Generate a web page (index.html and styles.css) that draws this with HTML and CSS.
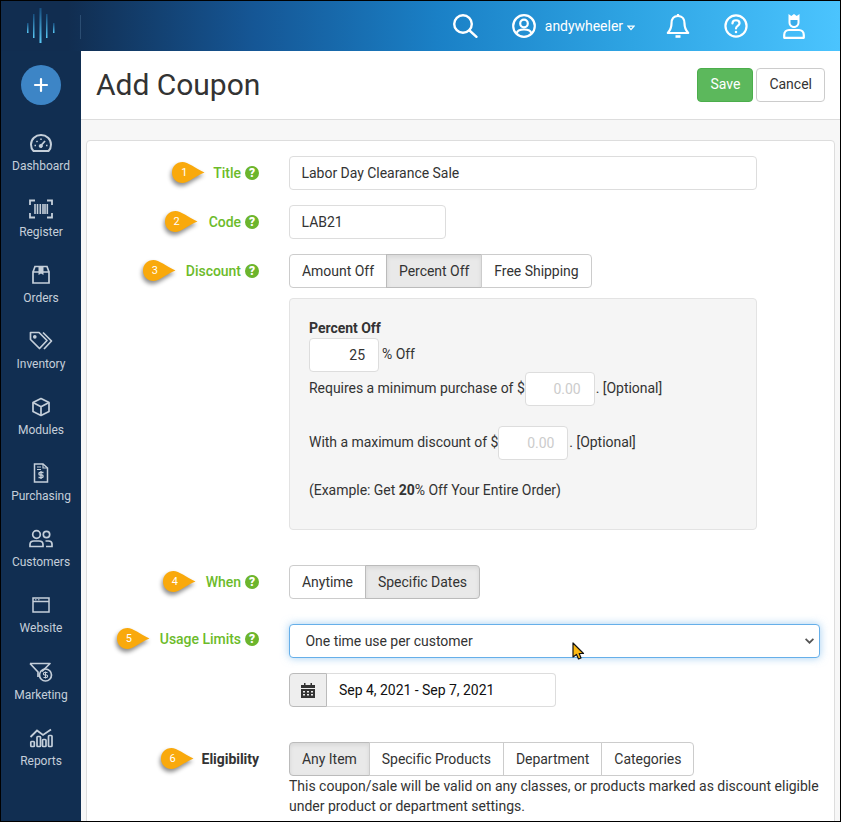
FILE: index.html
```html
<!DOCTYPE html>
<html lang="en">
<head>
<meta charset="utf-8">
<title>Add Coupon</title>
<link rel="stylesheet" href="styles.css">
</head>
<body>
<svg class="defs" width="0" height="0" aria-hidden="true">
  <defs>
    <symbol id="tag" viewBox="0 0 34 24">
      <path d="M11.5 1C17 1 24 7 33.5 11.5C24 15.500 17 22 11.5 22C5.500 22 1 17.500 1 11.500C1 5.500 5.500 1 11.500 1Z"/>
    </symbol>
  </defs>
</svg>
<div class="app">
  <header class="topbar">
    <div class="brand">
      <svg class="logo" width="30" height="36" viewBox="0 0 30 36">
        <defs>
          <linearGradient id="lg" x1="0" y1="0" x2="0" y2="1">
            <stop offset="0" stop-color="#174f80"/>
            <stop offset="1" stop-color="#59c8f5"/>
          </linearGradient>
        </defs>
        <rect x="1" y="16" width="1.500" height="10" fill="url(#lg)"/>
        <rect x="7" y="7" width="1.500" height="24" fill="url(#lg)"/>
        <rect x="13.500" y="1" width="2" height="35" fill="url(#lg)"/>
        <rect x="20" y="7" width="1.500" height="24" fill="url(#lg)"/>
        <rect x="27" y="16" width="1.500" height="10" fill="url(#lg)"/>
      </svg>
      <span class="brand-divider"></span>
    </div>
    <nav class="top-actions">
      <svg class="top-search" width="25" height="24" viewBox="0 0 25 24" fill="none" stroke="#fff" stroke-width="2.400" stroke-linecap="round"><circle cx="10" cy="10" r="8.800"/><path d="M16.500 16.500L23.500 22.800"/></svg>
      <svg class="top-user" width="24" height="24" viewBox="0 0 24 24" fill="none" stroke="#fff" stroke-width="2.200"><circle cx="12" cy="12" r="10.800"/><circle cx="12" cy="9.500" r="3.800"/><path d="M4.800 19C5.300 16.500 7.800 15.500 12 15.500S18.700 16.500 19.200 19"/></svg>
      <span class="top-name">andywheeler</span>
      <svg class="top-caret" width="8" height="6" viewBox="0 0 8 6" fill="none" stroke="#fff" stroke-width="1.200"><path d="M1 1.200H7L4 4.600Z"/></svg>
      <svg class="top-bell" width="24" height="26" viewBox="0 0 24 26" fill="none" stroke="#fff" stroke-width="2.200" stroke-linejoin="round"><path d="M12 3C7 3 5.500 7 5.500 10.500C5.500 15 4 17.500 1.800 20H22.200C20 17.500 18.500 15 18.500 10.500C18.500 7 17 3 12 3Z"/><path d="M12 1V3"/><path d="M9.500 23.500H14.500" stroke-width="2.600"/></svg>
      <svg class="top-help" width="24" height="24" viewBox="0 0 25 25" fill="none" stroke="#fff" stroke-width="2.300"><circle cx="12.500" cy="12.500" r="11"/><path d="M8.800 9.800C8.800 7.600 10.500 6.500 12.500 6.500C14.700 6.500 16.200 7.800 16.200 9.600C16.200 12.400 12.500 12.300 12.500 15" stroke-linecap="round"/><circle cx="12.500" cy="18.800" r="1.300" fill="#fff" stroke="none"/></svg>
      <svg class="top-admin" width="22" height="26" viewBox="0 0 22 26" fill="none" stroke="#fff" stroke-width="2.200"><path d="M5.500 1L8.300 3L11 1L13.700 3L16.500 1V9.500C16.500 12.500 14 15 11 15S5.500 12.500 5.500 9.500Z" fill="#fff" stroke="none"/><path d="M7.500 7H14.500V9.500C14.500 11.500 13 13 11 13S7.500 11.500 7.500 9.500Z" fill="#38ace9" stroke="none"/><path d="M1.200 24.800V22C1.200 19 3.500 17 6 17H16C18.500 17 20.800 19 20.800 22V24.800Z" stroke-linejoin="round"/></svg>
    </nav>
  </header>
  <div class="body">
    <aside class="sidebar">
      <div class="add-btn"><svg width="16" height="16" viewBox="0 0 16 16" stroke="#fff" stroke-width="2.200" stroke-linecap="round"><path d="M8 2V14M2 8H14"/></svg></div>
      <a class="nav-item">
        <svg width="22" height="20" viewBox="0 0 22 20" fill="none" stroke="#c5cfda" stroke-width="2"><path d="M3.500 18C2 16.500 1 14 1 11.500C1 6 5.500 2 11 2S21 6 21 11.500C21 14 20 16.500 18.500 18Z"/><path d="M11 12.500L15 8" stroke-width="1.800"/><circle cx="10.800" cy="13" r="1.600" fill="#c5cfda" stroke-width="1"/><path d="M4.500 12.500H6M6.500 8L7.500 9M11 5.500V7M17.500 12.500H16" stroke-width="1.500"/></svg>
        <span>Dashboard</span>
      </a>
      <a class="nav-item">
        <svg width="24" height="20" viewBox="0 0 24 20" fill="none" stroke="#c5cfda" stroke-width="1.800"><path d="M1 6V1.500H6M18 1.500H23V6M23 14V18.500H18M6 18.500H1V14"/><path d="M6 5V15M8.500 5V15M11.300 5V15M14 5V15M16 5V15M18.300 5V15" stroke-width="1.600"/></svg>
        <span>Register</span>
      </a>
      <a class="nav-item">
        <svg width="18" height="20" viewBox="0 0 18 20" fill="none" stroke="#c5cfda" stroke-width="1.700"><path d="M1 7H17V18H1ZM1 7L3 1.500H15L17 7"/><path d="M6.500 1.500H11.500V10L9 8.500L6.500 10Z" fill="#c5cfda" stroke="none"/></svg>
        <span>Orders</span>
      </a>
      <a class="nav-item">
        <svg width="24" height="20" viewBox="0 0 24 20" fill="none" stroke="#c5cfda" stroke-width="1.700" stroke-linejoin="round"><path d="M1.500 1.500H10L18 9.500L10.500 17.500L1.500 8.500Z"/><path d="M14 1.500L22.500 10L15 18"/><circle cx="5.800" cy="5.800" r="1" fill="#c5cfda"/></svg>
        <span>Inventory</span>
      </a>
      <a class="nav-item">
        <svg width="20" height="20" viewBox="0 0 20 20" fill="none" stroke="#c5cfda" stroke-width="1.700" stroke-linejoin="round"><path d="M10 1.500L18 5.500V14.500L10 18.500L2 14.500V5.500Z"/><path d="M2 5.500L10 9.700L18 5.500M10 9.700V18.500"/></svg>
        <span>Modules</span>
      </a>
      <a class="nav-item">
        <svg width="16" height="20" viewBox="0 0 16 20" fill="none" stroke="#c5cfda" stroke-width="1.500"><path d="M1.500 1H10L14.500 5V19H1.500Z"/><path d="M10 1V5H14.500M4 4H8M4 6.500H8" stroke-width="1.200"/><path d="M10.500 9.500H7C5.500 9.500 5.500 12 7 12H9C10.500 12 10.500 14.500 9 14.500H5.500M8 8V16" stroke-width="1.300"/></svg>
        <span>Purchasing</span>
      </a>
      <a class="nav-item">
        <svg width="24" height="20" viewBox="0 0 24 20" fill="none" stroke="#c5cfda" stroke-width="1.700"><circle cx="7.500" cy="5.500" r="3.800"/><circle cx="17.500" cy="5.500" r="3.200"/><path d="M1 17.500V15.500C1 13 3 12 5 12H10C12 12 14 13 14 15.500V17.500Z"/><path d="M16.500 12H19.500C21.500 12 23 13 23 15V17.500H17"/></svg>
        <span>Customers</span>
      </a>
      <a class="nav-item">
        <svg width="18" height="16" viewBox="0 0 18 16" fill="none" stroke="#c5cfda" stroke-width="1.500"><path d="M1 1H17V15H1ZM1 4.500H17"/><path d="M3 2.800H4.500M6 2.800H7.500" stroke-width="1"/></svg>
        <span>Website</span>
      </a>
      <a class="nav-item">
        <svg width="24" height="20" viewBox="0 0 24 20" fill="none" stroke="#c5cfda" stroke-width="1.700" stroke-linejoin="round"><path d="M1 1.500H21L13 9.500M1 1.500L9 10V15"/><circle cx="16.500" cy="13" r="6"/><path d="M18.500 10.500H15.500C14 10.500 14 13 15.500 13H17.500C19 13 19 15.500 17.500 15.500H14.500M16.500 9.500V16.500" stroke-width="1.100"/></svg>
        <span>Marketing</span>
      </a>
      <a class="nav-item">
        <svg width="24" height="20" viewBox="0 0 24 20" fill="none" stroke="#c5cfda" stroke-width="1.700"><path d="M1.500 9L8 2.500L14 7L22 1.500" stroke-width="1.800"/><rect x="1.800" y="13.500" width="3.500" height="5" rx=".8"/><rect x="8" y="8.500" width="3.500" height="10" rx=".8"/><rect x="13.500" y="11.500" width="3.500" height="7" rx=".8"/><rect x="19.500" y="7.500" width="3.500" height="11" rx=".8"/></svg>
        <span>Reports</span>
      </a>
    </aside>
    <main class="main">
      <div class="title-bar">
        <h1>Add Coupon</h1>
        <div class="title-actions">
          <button class="btn btn-save">Save</button>
          <button class="btn">Cancel</button>
        </div>
      </div>
      <div class="content">
        <form class="card">
          <div class="row">
            <div class="label-col"><span class="tag"><svg width="34" height="24"><use href="#tag"/></svg><b>1</b></span><span class="label">Title</span><span class="help">?</span></div>
            <div class="field field-title">Labor Day Clearance Sale</div>
          </div>
          <div class="row">
            <div class="label-col"><span class="tag tag-2"><svg width="34" height="24"><use href="#tag"/></svg><b>2</b></span><span class="label">Code</span><span class="help">?</span></div>
            <div class="field field-code">LAB21</div>
          </div>
          <div class="row row-discount">
            <div class="label-col"><span class="tag tag-3"><svg width="34" height="24"><use href="#tag"/></svg><b>3</b></span><span class="label">Discount</span><span class="help">?</span></div>
            <div class="stack">
              <div class="btn-group">
                <span class="seg">Amount Off</span><span class="seg active">Percent Off</span><span class="seg">Free Shipping</span>
              </div>
              <div class="panel">
                <strong class="panel-title">Percent Off</strong>
                <div class="panel-line"><span class="num">25</span><span class="after">% Off</span></div>
                <div class="panel-line">Requires a minimum purchase of $<span class="num placeholder">0.00</span><span class="after-tight">. [Optional]</span></div>
                <div class="panel-line panel-gap">With a maximum discount of $<span class="num placeholder">0.00</span><span class="after-tight">. [Optional]</span></div>
                <p class="panel-note">(Example: Get <b>20</b>% Off Your Entire Order)</p>
              </div>
            </div>
          </div>
          <div class="row row-when">
            <div class="label-col"><span class="tag tag-4"><svg width="34" height="24"><use href="#tag"/></svg><b>4</b></span><span class="label">When</span><span class="help">?</span></div>
            <div class="btn-group">
              <span class="seg">Anytime</span><span class="seg active">Specific Dates</span>
            </div>
          </div>
          <div class="row row-usage">
            <div class="label-col label-col-up"><span class="tag tag-5"><svg width="34" height="24"><use href="#tag"/></svg><b>5</b></span><span class="label">Usage Limits</span><span class="help">?</span></div>
            <div class="stack">
              <div class="select">
                <span>One time use per customer</span>
                <svg width="9" height="6" viewBox="0 0 9 6" fill="none" stroke="#555" stroke-width="1.700"><path d="M.6 .8L4.500 4.700L8.400 .8"/></svg>
              </div>
              <div class="date-group">
                <span class="addon"><svg width="14" height="15" viewBox="0 0 14 15"><path fill="#333" d="M3 0H4.500V2H9.500V0H11V2H14V5H0V2H3ZM0 6H14V15H0ZM2 8V9.500H4V8ZM6 8V9.500H8V8ZM10 8V9.500H12V8ZM2 11V12.500H4V11ZM6 11V12.500H8V11ZM10 11V12.500H12V11Z" fill-rule="evenodd"/></svg></span>
                <span class="date-value">Sep 4, 2021 - Sep 7, 2021</span>
              </div>
            </div>
          </div>
          <div class="row row-elig">
            <div class="label-col"><span class="tag tag-6"><svg width="34" height="24"><use href="#tag"/></svg><b>6</b></span><span class="label label-dark">Eligibility</span></div>
            <div class="stack stack-tight">
              <div class="btn-group">
                <span class="seg active">Any Item</span><span class="seg">Specific Products</span><span class="seg">Department</span><span class="seg">Categories</span>
              </div>
              <p class="elig-note">This coupon/sale will be valid on any classes, or products marked as discount eligible under product or department settings.</p>
            </div>
          </div>
        </form>
      </div>
    </main>
  </div>
  <svg class="cursor" width="14" height="20" viewBox="0 0 14 20"><path d="M1 1V15L4.500 12.500L6.500 17L9 16L7.200 11.500H11.500Z" fill="#fdb913" stroke="#111" stroke-width="1.200" stroke-linejoin="round"/></svg>
</div>
</body>
</html>
```
FILE: styles.css
```css
* { box-sizing: border-box; }
html, body { margin: 0; padding: 0; }
body { font-family: Roboto, "Liberation Sans", sans-serif; font-size: 14px; line-height: 20px; letter-spacing: -0.03px; color: #333; background: #000; }
.defs { display: block; height: 0; }
.app { position: relative; width: 841px; height: 822px; border: 1px solid #000; overflow: hidden; background: #f7f7f7; display: flex; flex-direction: column; }

.topbar { height: 50px; flex: none; display: flex; justify-content: space-between; align-items: center; background: linear-gradient(90deg, #112d50 0, #112d50 8%, #155695 30%, #1a80c6 52%, #2ea4e3 75%, #4bc4fe 100%); }
.brand { width: 80px; height: 50px; display: flex; align-items: center; position: relative; }
.logo { margin: 0 0 0 25px; flex: none; position: relative; top: -1px; }
.brand-divider { position: absolute; left: 79px; top: 14px; width: 1px; height: 24px; background: #2b4d72; }
.top-actions { display: flex; align-items: center; height: 50px; padding-right: 35px; }
.top-search { margin-right: 34px; }
.top-user { margin-right: 9px; }
.top-name { color: #fff; font-size: 14px; }
.top-caret { margin: 3px 0 0 4px; }
.top-bell { margin-left: 31px; }
.top-help { margin-left: 34px; }
.top-admin { margin-left: 35px; }

.body { flex: 1; display: flex; min-height: 0; }
.sidebar { width: 80px; flex: none; background: #112e51; display: flex; flex-direction: column; align-items: center; padding-top: 14px; }
.add-btn { width: 40px; height: 40px; border-radius: 50%; background: #3d85c6; display: flex; align-items: center; justify-content: center; margin-bottom: 25.700px; }
.nav-item { height: 66.12px; flex: none; width: 100%; display: flex; flex-direction: column; align-items: center; color: #c5cfda; font-size: 12px; line-height: 16px; }
.nav-item svg { height: 22px; flex: none; margin-top: 1px; margin-bottom: 4px; }
.main { flex: 1; min-width: 0; display: flex; flex-direction: column; }
.title-bar { height: 69px; flex: none; background: #fff; border-bottom: 1px solid #ddd; display: flex; align-items: center; justify-content: space-between; padding: 0 15px; }
h1 { margin: 0; font-size: 30px; font-weight: 400; line-height: 36px; color: #333; }
.title-actions { display: flex; gap: 3px; }
.btn { height: 34px; padding: 0 12px 2px; border: 1px solid #ccc; border-radius: 4px; background: #fff; color: #333; font: 14px/20px Roboto, sans-serif; }
.btn-save { background: #5cb85c; border-color: #4cae4c; color: #fff; }

.content { flex: 1; padding: 20px 5px 0; min-height: 0; }
.card { background: #fff; border: 1px solid #ddd; border-radius: 4px; padding: 15px 15px 0; height: 700px; }
.row { display: flex; gap: 30px; margin-bottom: 15px; align-items: flex-start; }
.label-col { width: 157px; flex: none; height: 34px; display: flex; align-items: center; justify-content: flex-end; }
.label-col-up { margin-top: -2px; }
.label { font-weight: 500; color: #6cbb2a; }
.label-dark { color: #333; font-weight: 700; }
.help { width: 14px; height: 14px; border-radius: 50%; background: #6cb52d; color: #fff; font: 900 12px/14px Roboto, sans-serif; text-align: center; margin-left: 4px; }
.tag { position: relative; width: 34px; height: 24px; margin-right: 8px; flex: none; }
.tag svg { display: block; fill: #f9a90c; filter: drop-shadow(-1px 3px 2px rgba(0,0,0,.45)); overflow: visible; }
.tag b { position: absolute; left: 1px; top: 2px; width: 24px; text-align: center; color: #fff; font: 400 11px/20px Roboto, sans-serif; }
.tag-2 { margin-right: 11px; }
.tag-3 { margin-right: 10px; }
.tag-4 { margin-right: 10px; }
.tag-5 { margin-right: 10px; }

.field { height: 34px; border: 1px solid #ddd; border-radius: 4px; padding: 6px 12px 6px 11.500px; color: #333; background: #fff; }
.field-title { width: 468px; }
.field-code { width: 157px; }
.stack { display: flex; flex-direction: column; gap: 10px; align-items: flex-start; }
.stack-tight { gap: 0; }
.btn-group { display: inline-flex; height: 34px; }
.seg { height: 34px; padding: 6px 12px; border: 1px solid #ccc; margin-left: -1px; background: #fff; color: #333; white-space: nowrap; }
.seg:first-child { margin-left: 0; border-radius: 4px 0 0 4px; }
.seg:last-child { border-radius: 0 4px 4px 0; }
.seg.active { background: #e9e9e9; border-color: #bbb; box-shadow: inset 0 2px 4px rgba(0,0,0,.08); }

.panel { width: 468px; height: 232px; background: #f5f5f5; border: 1px solid #e3e3e3; border-radius: 4px; padding: 19px; }
.panel-title { display: block; font-weight: 700; height: 20px; }
.panel-line { height: 34px; padding-bottom: 2px; display: flex; align-items: center; }
.panel-gap { margin-top: 20px; }
.num { width: 70px; height: 34px; margin-bottom: -2px; flex: none; background: #fff; border: 1px solid #ddd; border-radius: 4px; padding: 6px 13px 6px 12px; text-align: right; color: #333; }
.placeholder { color: #ccc; }
.after { margin-left: 3px; }
.after-tight { margin-left: 1px; }
.panel-note { margin: 20px 0 0; }

.row-discount { margin-bottom: 35px; }
.row-when { margin-bottom: 25px; }
.row-usage { margin-bottom: 35px; }
.select { width: 531px; height: 34px; border: 1px solid #66afe9; border-radius: 4px; padding: 6px 5px 6px 15.500px; background: #fff; display: flex; justify-content: space-between; align-items: center; box-shadow: 0 0 8px rgba(102,175,233,.6); }
.stack .select + .date-group { margin-top: 5px; }
.date-group { display: flex; height: 34px; width: 267px; }
.addon { width: 38px; background: #eee; border: 1px solid #bbb; border-radius: 4px 0 0 4px; display: flex; align-items: center; justify-content: center; }
.date-value { flex: 1; border: 1px solid #ddd; border-left: 0; border-radius: 0 4px 4px 0; padding: 6px 12px; color: #111; }
.elig-note { margin: 0; width: 531px; letter-spacing: -0.01px; }
.cursor { position: absolute; left: 571px; top: 641px; }
```
